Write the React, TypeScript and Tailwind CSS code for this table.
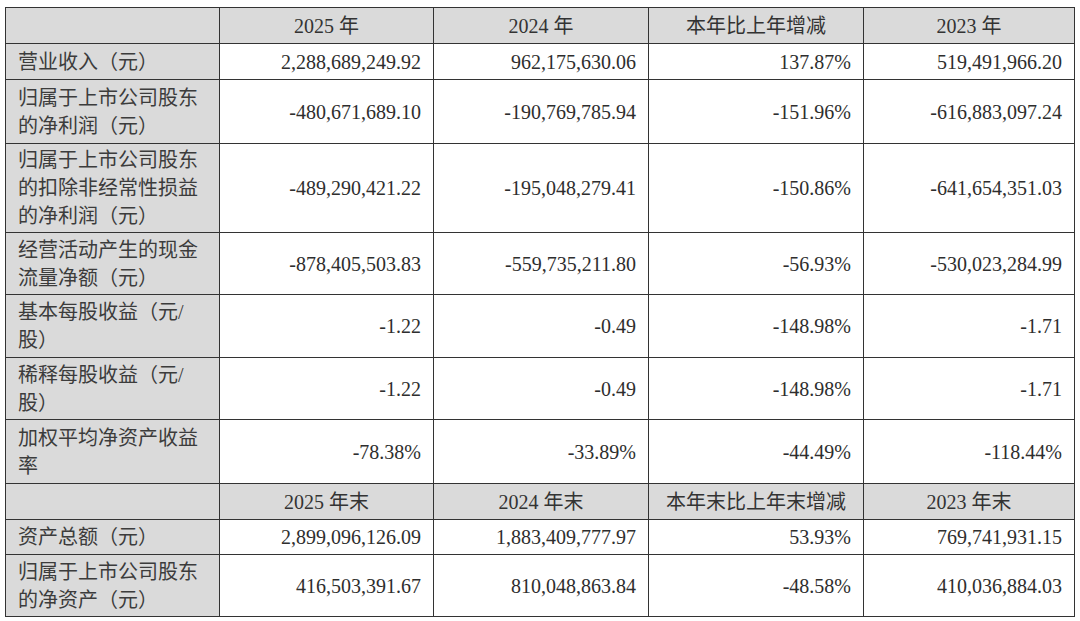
const font = { fontFamily: '"Liberation Serif", "Noto Sans CJK SC", serif' };

type Row = {
  label: string[];
  values: string[];
  h: string;
  head?: boolean;
};

const rows: Row[] = [
  { label: [""], values: ["2025 年", "2024 年", "本年比上年增减", "2023 年"], h: "h-[36px]", head: true },
  { label: ["营业收入（元）"], values: ["2,288,689,249.92", "962,175,630.06", "137.87%", "519,491,966.20"], h: "h-[36px]" },
  { label: ["归属于上市公司股东", "的净利润（元）"], values: ["-480,671,689.10", "-190,769,785.94", "-151.96%", "-616,883,097.24"], h: "h-[64px]" },
  { label: ["归属于上市公司股东", "的扣除非经常性损益", "的净利润（元）"], values: ["-489,290,421.22", "-195,048,279.41", "-150.86%", "-641,654,351.03"], h: "h-[89px]" },
  { label: ["经营活动产生的现金", "流量净额（元）"], values: ["-878,405,503.83", "-559,735,211.80", "-56.93%", "-530,023,284.99"], h: "h-[62px]" },
  { label: ["基本每股收益（元/", "股）"], values: ["-1.22", "-0.49", "-148.98%", "-1.71"], h: "h-[63px]" },
  { label: ["稀释每股收益（元/", "股）"], values: ["-1.22", "-0.49", "-148.98%", "-1.71"], h: "h-[62px]" },
  { label: ["加权平均净资产收益", "率"], values: ["-78.38%", "-33.89%", "-44.49%", "-118.44%"], h: "h-[64px]" },
  { label: [""], values: ["2025 年末", "2024 年末", "本年末比上年末增减", "2023 年末"], h: "h-[36px]", head: true },
  { label: ["资产总额（元）"], values: ["2,899,096,126.09", "1,883,409,777.97", "53.93%", "769,741,931.15"], h: "h-[35px]" },
  { label: ["归属于上市公司股东", "的净资产（元）"], values: ["416,503,391.67", "810,048,863.84", "-48.58%", "410,036,884.03"], h: "h-[62px]" },
];

export default function App() {
  return (
    <div className="w-[1080px] h-[621px] bg-white pt-[7px] pl-[5px] text-[20px] text-[#2e2e2e]" style={font}>
      <table className="table-fixed border-collapse w-[1069px]">
        <colgroup>
          <col className="w-[214px]" />
          <col className="w-[214px]" />
          <col className="w-[215px]" />
          <col className="w-[215px]" />
          <col className="w-[211px]" />
        </colgroup>
        <tbody>
          {rows.map((r, i) => (
            <tr key={i} className={r.h}>
              <td className="border-[1.5px] border-[#333] bg-[#dadada] pl-3 pr-1 align-middle leading-[28px] whitespace-nowrap text-[#3c3c3c]">
                {r.label.map((l, j) => (
                  <div key={j}>{l}</div>
                ))}
              </td>
              {r.values.map((v, j) => (
                <td
                  key={j}
                  className={
                    r.head
                      ? "border-[1.5px] border-[#333] bg-[#dadada] text-center align-middle leading-[28px] whitespace-nowrap text-[#333]"
                      : "border-[1.5px] border-[#333] bg-white text-right pr-3 align-middle leading-[28px] whitespace-nowrap"
                  }
                >
                  {v}
                </td>
              ))}
            </tr>
          ))}
        </tbody>
      </table>
    </div>
  );
}
